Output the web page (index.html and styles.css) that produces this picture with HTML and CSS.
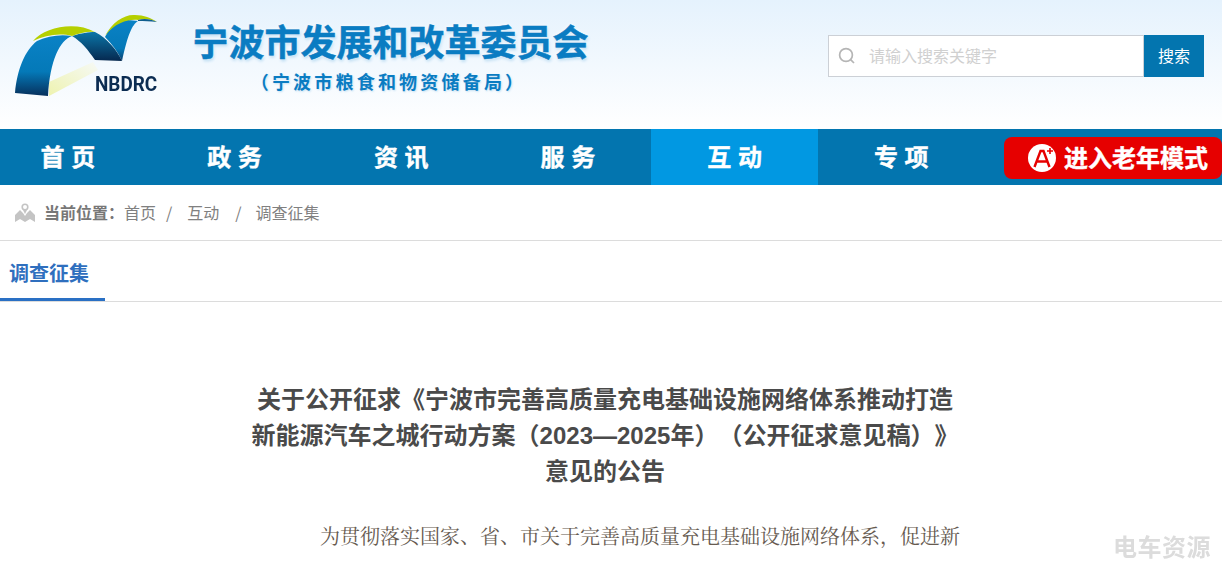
FILE: index.html
```html
<!DOCTYPE html>
<html lang="zh-CN">
<head>
  <meta charset="UTF-8">
  <title>宁波市发展和改革委员会</title>
  <link rel="stylesheet" href="styles.css">
</head>
<body>
  <!-- Header -->
  <header class="top">
    <svg class="logo" width="160" height="100" viewBox="0 0 160 100">
      <defs>
        <linearGradient id="archBlue" x1="0" y1="0" x2="0" y2="1">
          <stop offset="0" stop-color="#0a82c6"/>
          <stop offset="0.6" stop-color="#0479b8"/>
          <stop offset="1" stop-color="#07305c"/>
        </linearGradient>
        <linearGradient id="archSmall" x1="0" y1="0" x2="0" y2="1">
          <stop offset="0" stop-color="#0a82c6"/>
          <stop offset="0.7" stop-color="#0479b8"/>
          <stop offset="1" stop-color="#0a3f6e"/>
        </linearGradient>
        <linearGradient id="archDark" x1="0" y1="0" x2="0" y2="1">
          <stop offset="0" stop-color="#0b76a8"/>
          <stop offset="1" stop-color="#06284f"/>
        </linearGradient>
        <linearGradient id="band" x1="0" y1="1" x2="1" y2="0">
          <stop offset="0" stop-color="#eef3b0"/>
          <stop offset="1" stop-color="#f6f9f6"/>
        </linearGradient>
      </defs>
      <path d="M49 82 L93 62 L98 70 L49 96 Z" fill="url(#band)"/>
      <path d="M105 37 C110 27 118 21 128 20 L138 21 C132 25 128 34 122 61 C118 52 112 44 105 37 Z" fill="url(#archSmall)"/>
      <path d="M72 36 C82 33 88 32 95 32 C107 38 117 50 122 61 L95 60 C88 50 82 42 72 36 Z" fill="url(#archDark)"/>
      <path d="M15 93 C17 70 25 50 37 41 C48 36 60 34 72 36 C60 40 50 60 48 96 Z" fill="url(#archBlue)"/>
      <path d="M33 41 C45 27 75 21 95 32 C88 31 80 33 72 36 C60 33 45 35 33 41 Z" fill="#b5cf00"/>
      <path d="M105 36 C112 22 125 14 135 15 C144 15 151 18 157 22 C150 19 144 18 138 20 C130 19 115 22 105 36 Z" fill="#b5cf00"/>
      <path d="M138 20 C144 18 151 19 157 22 C150 21 144 21 138 21 Z" fill="#0f5e8e"/>
    </svg>
    <span class="logo-mark">NBDRC</span>
    <div class="site-name">
      <h1 class="site-title">宁波市发展和改革委员会</h1>
      <p class="site-sub">（宁波市粮食和物资储备局）</p>
    </div>
    <form class="search">
      <div class="search-box">
        <svg width="18" height="18" viewBox="0 0 18 18" fill="none" stroke="#b5b5b5" stroke-width="1.7">
          <circle cx="8" cy="8" r="6.4"/>
          <path d="M12.6 12.6 L16 16"/>
        </svg>
        <span class="search-hint">请输入搜索关键字</span>
      </div>
      <button type="button" class="search-btn">搜索</button>
    </form>
  </header>

  <!-- Navigation -->
  <nav class="main-nav">
    <a href="#" class="nav-item">首 页</a>
    <a href="#" class="nav-item">政 务</a>
    <a href="#" class="nav-item">资 讯</a>
    <a href="#" class="nav-item">服 务</a>
    <a href="#" class="nav-item active">互 动</a>
    <a href="#" class="nav-item">专 项</a>
    <a href="#" class="elder-btn">
      <svg width="28" height="28" viewBox="0 0 28 28">
        <circle cx="14" cy="14" r="14" fill="#fff"/>
        <path d="M6.5 23 L12.5 7 L15.5 7 L21.5 23 M9 17.5 L19 17.5" fill="none" stroke="#e60000" stroke-width="2.4"/>
        <path d="M19 7 L25 7 M22 4 L22 10" stroke="#e60000" stroke-width="1.6"/>
      </svg>
      <span class="elder-text">进入老年模式</span>
    </a>
  </nav>

  <!-- Breadcrumb -->
  <div class="crumbs">
    <svg width="20" height="20" viewBox="0 0 20 20">
      <path d="M0 19 L0 12 L5 7 L8 10 L10 13 L12 10 L15 7 L20 12 L20 19 L15 16 L10 19 L5 16 Z" fill="#c4c4c4"/>
      <circle cx="10" cy="4" r="2.8" fill="none" stroke="#c4c4c4" stroke-width="1.6"/>
      <path d="M8 7 L10 11 L12 7 Z" fill="#c4c4c4"/>
    </svg>
    <b class="crumb-label">当前位置：</b>
    <a href="#">首页</a>
    <span class="sep first">/</span>
    <a href="#">互动</a>
    <span class="sep">/</span>
    <a href="#">调查征集</a>
  </div>

  <!-- Tab -->
  <div class="tabs">
    <a href="#" class="tab">调查征集</a>
  </div>

  <!-- Article -->
  <main class="article">
    <h2 class="article-title">关于公开征求《宁波市完善高质量充电基础设施网络体系推动打造<br>新能源汽车之城行动方案（2023—2025年）（公开征求意见稿）》<br>意见的公告</h2>
    <p class="article-text">为贯彻落实国家、省、市关于完善高质量充电基础设施网络体系，促进新</p>
  </main>

  <div class="watermark">电车资源</div>
</body>
</html>
```
FILE: styles.css
```css
* {
  margin: 0;
  padding: 0;
  box-sizing: border-box;
}

body {
  font-family: "Liberation Sans", "Noto Sans CJK SC", sans-serif;
  background: #fff;
  height: 562px;
  overflow: hidden;
  position: relative;
  text-spacing-trim: space-all;
}

a {
  text-decoration: none;
  color: inherit;
}

/* Header */
.top {
  height: 129px;
  background: linear-gradient(to bottom, #e5f2fd, #ffffff);
  display: flex;
  align-items: flex-start;
  position: relative;
}

.logo {
  flex: none;
}

.logo-mark {
  position: absolute;
  left: 94.5px;
  top: 72px;
  font-family: "Roboto", sans-serif;
  font-weight: 700;
  font-size: 21px;
  line-height: 24px;
  color: #0b2c52;
  transform: scaleX(0.9);
  transform-origin: left;
}

.site-name {
  margin: 20px 0 0 32px;
  width: 397px;
  text-align: center;
}

.site-title {
  font-size: 36px;
  line-height: 48px;
  font-weight: 700;
  color: #0a7cc2;
  white-space: nowrap;
  -webkit-text-stroke: 0.5px #0a7cc2;
  text-shadow: 0 0 4px #fff, 1px 2px 3px #a9d3ef;
}

.site-sub {
  font-size: 18px;
  line-height: 24px;
  margin-top: 3px;
  padding-right: 4px;
  font-weight: 700;
  letter-spacing: 3.2px;
  color: #0a7cc2;
  white-space: nowrap;
  text-shadow: 1px 1px 2px #c3e0f3;
}

.search {
  display: flex;
  margin: 35px 18px 0 auto;
}

.search-box {
  width: 316px;
  height: 42px;
  border: 1px solid #ccd0d6;
  background: #fff;
  display: flex;
  align-items: center;
  gap: 13px;
  padding: 0 0 1px 9px;
}

.search-hint {
  font-size: 16px;
  padding-bottom: 1px;
  color: #d0d0d0;
}

.search-btn {
  width: 60px;
  height: 42px;
  border: none;
  padding-bottom: 2px;
  background: #0375af;
  color: #fff;
  font-size: 16px;
  font-family: inherit;
}

/* Navigation */
.main-nav {
  height: 56px;
  background: #0375af;
  display: flex;
  align-items: center;
}

.nav-item {
  width: 166.7px;
  height: 56px;
  line-height: 58px;
  text-align: center;
  color: #fff;
  font-size: 24px;
  font-weight: 700;
  -webkit-text-stroke: 0.4px #fff;
  flex: none;
}

.nav-item:first-child {
  margin-left: -15.5px;
}

.nav-item.active {
  background: #0198e2;
}

.elder-btn {
  margin: 2px 0 0 auto;
  width: 218px;
  height: 42px;
  background: #e60000;
  border-radius: 8px;
  display: flex;
  align-items: center;
  gap: 8px;
  padding-left: 24px;
  color: #fff;
  font-size: 24px;
  font-weight: 700;
  white-space: nowrap;
}

.elder-text {
  padding-bottom: 3px;
  -webkit-text-stroke: 0.4px #fff;
}

/* Breadcrumb */
.crumbs {
  height: 56px;
  border-bottom: 1px solid #dcdcdc;
  display: flex;
  align-items: center;
  padding: 0 0 2px 15px;
  font-size: 16px;
  color: #808080;
}

.crumbs svg {
  margin-top: 2px;
}

.crumb-label {
  margin-left: 9px;
  color: #777;
}

.crumbs .sep {
  margin: 0 14px 0 16px;
  font-family: "Noto Sans CJK SC", sans-serif;
}

.crumbs .sep.first {
  margin: 0 15px 0 10px;
}

/* Tab */
.tabs {
  height: 61px;
  border-bottom: 1px solid #dcdcdc;
}

.tab {
  display: block;
  width: 105px;
  height: 60px;
  padding-left: 9px;
  border-bottom: 3px solid #2a70c4;
  font-size: 20px;
  line-height: 67px;
  font-weight: 700;
  color: #2f6fbe;
}

/* Article */
.article {
  width: 720px;
  margin: 80px 0 0 245px;
}

.article-title {
  font-size: 24px;
  line-height: 36px;
  font-weight: 700;
  color: #4a4a4a;
  text-align: center;
  white-space: nowrap;
}

.article-text {
  margin: 28px 0 0 75px;
  font-family: "Noto Serif CJK SC", "Liberation Serif", "Noto Sans CJK SC", serif;
  font-size: 20px;
  line-height: 36px;
  color: #665a50;
  white-space: nowrap;
}

.watermark {
  position: absolute;
  right: 11px;
  top: 533px;
  font-size: 24px;
  line-height: 30px;
  font-weight: 700;
  letter-spacing: 0.5px;
  color: #dcdcdc;
  filter: blur(0.5px);
}
```
